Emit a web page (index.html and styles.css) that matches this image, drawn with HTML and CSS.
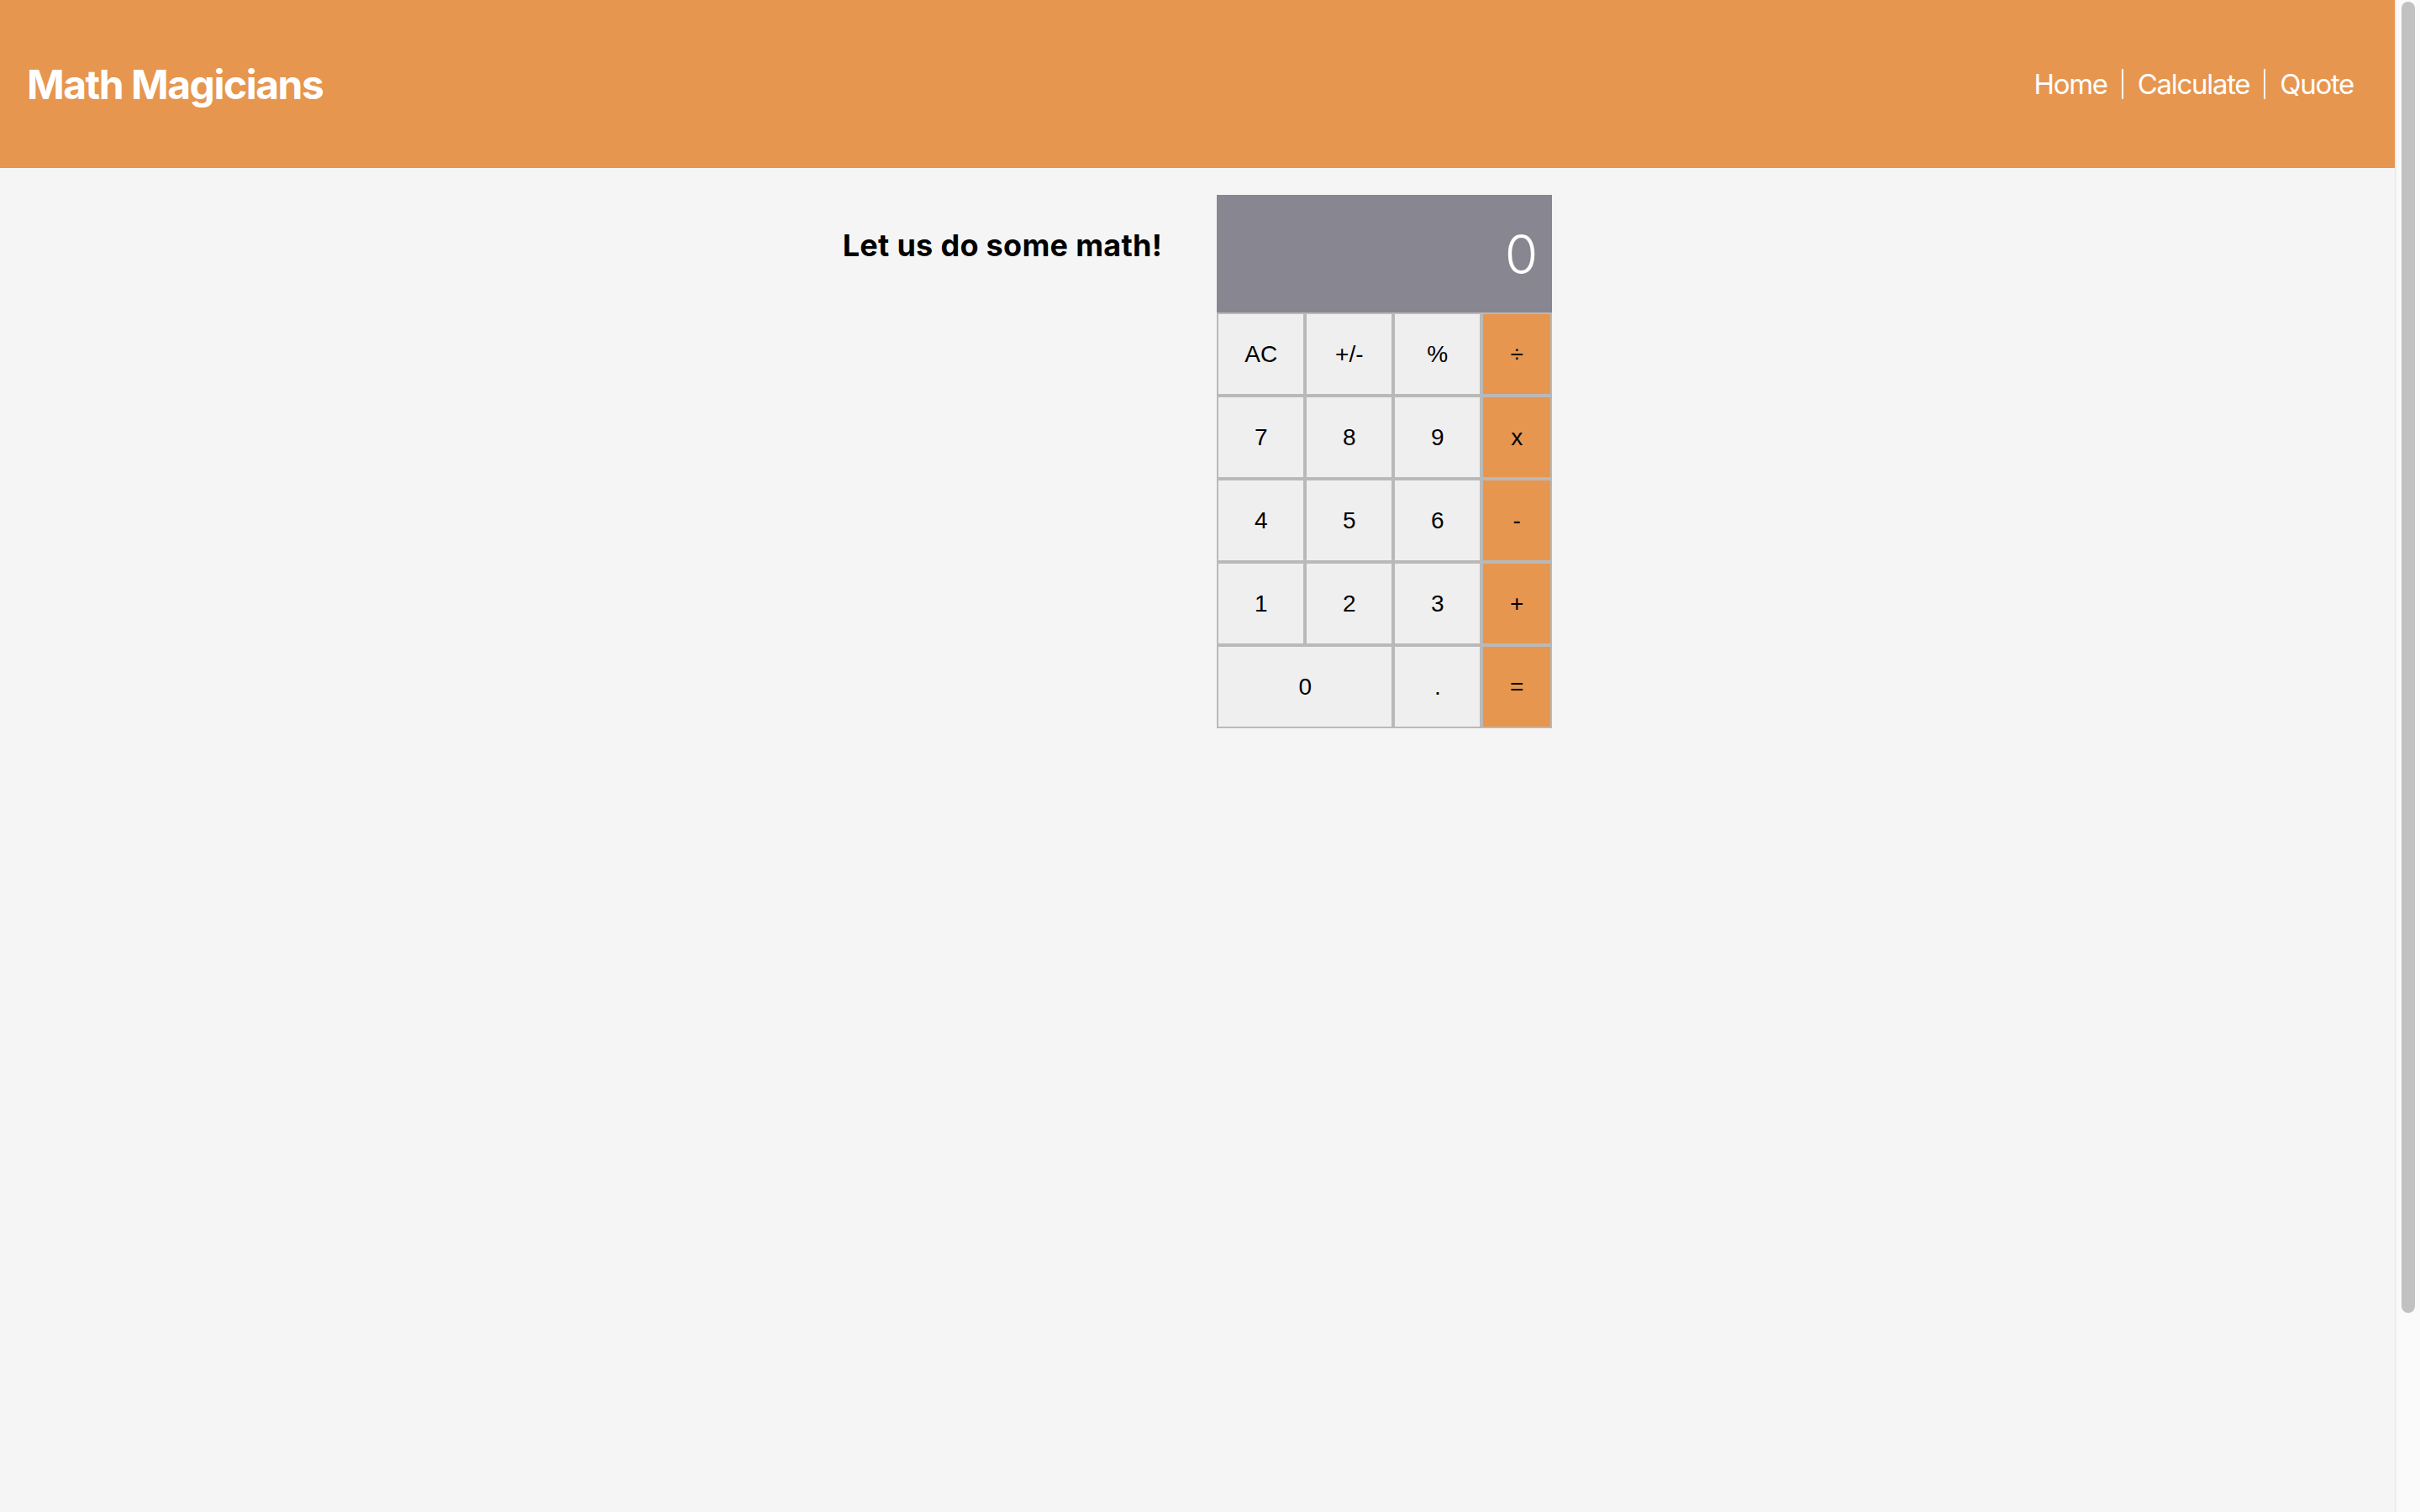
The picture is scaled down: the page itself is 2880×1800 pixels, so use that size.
FILE: index.html
```html
<!DOCTYPE html>
<html lang="en">
<head>
<meta charset="utf-8">
<title>Math Magicians</title>
<link rel="stylesheet" href="styles.css">
</head>
<body>
<div class="page">
  <header class="header">
    <h1 class="logo">Math Magicians</h1>
    <nav class="nav">
      <a class="nav-link" href="#">Home</a>
      <a class="nav-link sep" href="#">Calculate</a>
      <a class="nav-link sep" href="#">Quote</a>
    </nav>
  </header>
  <main class="main">
    <h2 class="intro">Let us do some math!</h2>
    <div class="calc">
      <div class="display">0</div>
      <div class="keys">
        <button class="key">AC</button>
        <button class="key">+/-</button>
        <button class="key">%</button>
        <button class="key op">÷</button>
        <button class="key">7</button>
        <button class="key">8</button>
        <button class="key">9</button>
        <button class="key op">x</button>
        <button class="key">4</button>
        <button class="key">5</button>
        <button class="key">6</button>
        <button class="key op">-</button>
        <button class="key">1</button>
        <button class="key">2</button>
        <button class="key">3</button>
        <button class="key op">+</button>
        <button class="key wide">0</button>
        <button class="key">.</button>
        <button class="key op">=</button>
      </div>
    </div>
  </main>
</div>
<div class="scrollbar" aria-hidden="true"><div class="scrollbar-thumb"></div></div>
</body>
</html>
```
FILE: styles.css
```css
html, body {
  margin: 0;
  padding: 0;
  background: #f5f5f5;
}

.page {
  margin-right: 30px;
  min-height: 1800px;
  font-family: Inter, "Liberation Sans", sans-serif;
}

.scrollbar {
  position: fixed;
  top: 0;
  right: 0;
  width: 28px;
  height: 100vh;
  background: #fafafa;
  border-left: 2px solid #ececec;
}

.scrollbar-thumb {
  position: absolute;
  top: 2px;
  left: 6px;
  width: 16px;
  height: 1561px;
  border-radius: 8px;
  background: #c1c1c1;
}

.header {
  height: 200px;
  background: #e6964f;
  display: flex;
  align-items: center;
  justify-content: space-between;
  padding: 0 32px;
}

.logo {
  margin: 0;
  color: #fff;
  font-size: 48px;
  font-weight: 700;
  letter-spacing: -1.5px;
}

.nav {
  display: flex;
  align-items: center;
}

.nav-link {
  color: #fff;
  text-decoration: none;
  font-size: 33px;
  font-weight: 400;
  letter-spacing: -1.3px;
  line-height: 36px;
  padding: 0 17px;
}

.nav-link.sep {
  border-left: 2px solid #fff;
}

.main {
  display: flex;
  justify-content: center;
  align-items: flex-start;
  gap: 65px;
  padding-top: 32px;
}

.intro {
  margin: 38px 0 0;
  font-size: 36px;
  line-height: 44px;
  font-weight: 700;
  color: #000;
  letter-spacing: 0.3px;
}

.calc {
  width: 399px;
}

.display {
  height: 140px;
  background: #878691;
  color: #fff;
  font-family: Inter, "Liberation Sans", sans-serif;
  font-weight: 300;
  font-size: 64px;
  display: flex;
  align-items: center;
  justify-content: flex-end;
  padding-right: 17px;
  box-sizing: border-box;
}

.keys {
  display: grid;
  grid-template-columns: 105px 105px 105px 84px;
  grid-auto-rows: 99px;
}

.key {
  margin: 0;
  border: 2px solid #b9b9b9;
  background: #efefef;
  font-family: "Liberation Sans", Arial, sans-serif;
  font-size: 28px;
  color: #000;
  padding: 0;
}

.key.op {
  background: #e6964f;
}

.key.wide {
  grid-column: span 2;
}
```
